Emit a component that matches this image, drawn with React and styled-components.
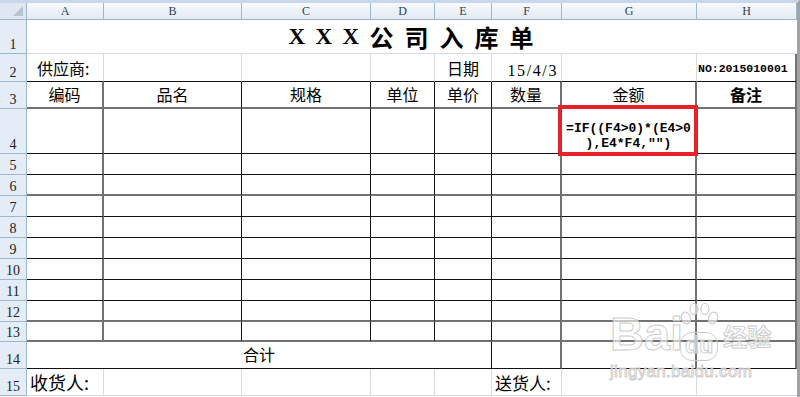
import styled, { createGlobalStyle } from "styled-components";

const GlobalStyle = createGlobalStyle`
  html, body { margin: 0; padding: 0; background: #fff; }
  body { width: 800px; height: 397px; overflow: hidden; }
`;

// border kinds used by the sheet
const LINE = {
  g: "1px solid #d4dbe6",
  k: "1px solid #111",
  d: "2px solid #727272",
  h: "1px solid #9eb6ce",
  n: "none",
};

const CJK = `"Noto Sans CJK SC", "Noto Sans", sans-serif`;
const SERIF = `"Liberation Serif", "DejaVu Serif", serif`;
const MONO = `"Liberation Mono", "DejaVu Sans Mono", monospace`;

const Frame = styled.div`
  position: relative;
  width: 800px;
  height: 397px;
  box-sizing: border-box;
  border-top: 3px solid #c8d7eb;
  border-right: 3px solid #a3a3a3;
  overflow: hidden;
  background: #fff;
`;

const Sheet = styled.div`
  display: grid;
  grid-template-columns: 27px 77px 138px 129px 64px 57px 70px 135px 100px;
  grid-template-rows: 17px 34px 28px 27px 45px repeat(8, 21px) 20px 27px 27px;
`;

const ColHead = styled.div`
  box-sizing: border-box;
  border-right: ${LINE.h};
  border-bottom: ${LINE.h};
  background: linear-gradient(#f7f9fc, #e3eaf3);
  display: flex;
  align-items: center;
  justify-content: center;
  font-family: ${SERIF};
  font-size: 12px;
  color: #2a3f5a;
  position: relative;
`;

const Corner = styled(ColHead)`
  background: #dfe7f2;
  &::after {
    content: "";
    position: absolute;
    right: 3px;
    bottom: 3px;
    width: 0;
    height: 0;
    border-left: 10px solid transparent;
    border-bottom: 10px solid #b9c4d2;
  }
`;

const RowHead = styled.div`
  box-sizing: border-box;
  border-right: ${LINE.h};
  border-bottom: ${LINE.h};
  background: #e4ecf7;
  display: flex;
  align-items: flex-end;
  justify-content: center;
  font-family: ${SERIF};
  font-size: 14px;
  line-height: 16px;
  color: #222;
`;

const Cell = styled.div`
  box-sizing: border-box;
  grid-column: span ${(p) => p.$span || 1};
  border-right: ${(p) => LINE[p.$r || "g"]};
  border-bottom: ${(p) => LINE[p.$b || "g"]};
  display: flex;
  align-items: ${(p) => p.$v || "flex-end"};
  justify-content: ${(p) => p.$h || "center"};
  padding: 0 ${(p) => p.$pr || 0}px ${(p) => p.$pb ?? 1}px ${(p) => p.$pl || 0}px;
  font-family: ${CJK};
  font-size: ${(p) => p.$size || 16}px;
  font-weight: ${(p) => (p.$bold ? 700 : 400)};
  color: #000;
  white-space: nowrap;
  position: relative;
`;

const Title = styled(Cell)`
  gap: 11px;
  font-size: 24px;
  font-weight: 700;
  padding-right: 2px;
`;

const TitleChar = styled.span`
  width: ${(p) => (p.$latin ? 16 : 24)}px;
  text-align: center;
  font-family: ${(p) => (p.$latin ? SERIF : CJK)};
  font-size: ${(p) => (p.$latin ? 23 : 24)}px;
`;

const DateText = styled.span`
  font-family: ${SERIF};
  font-size: 16px;
  letter-spacing: 1.6px;
`;

const Serial = styled.span`
  font-family: ${MONO};
  font-size: 11.5px;
  font-weight: 700;
  margin-bottom: 5px;
`;

const Formula = styled.div`
  font-family: ${MONO};
  font-size: 13px;
  font-weight: 700;
  line-height: 15px;
  text-align: center;
  margin-bottom: 1px;
`;

const Highlight = styled.div`
  position: absolute;
  left: -4px;
  top: -4px;
  right: -3px;
  bottom: -3px;
  border: 4px solid #e8202a;
  z-index: 2;
  pointer-events: none;
`;

const Watermark = styled.div`
  position: absolute;
  left: 610px;
  top: 294px;
  pointer-events: none;
  white-space: nowrap;
  font-family: "Liberation Sans", Arial, sans-serif;
  font-weight: 700;
  color: rgba(255, 255, 255, 0.6);
  -webkit-text-stroke: 1px rgba(200, 200, 200, 0.9);
  z-index: 3;
`;

const MarkTop = styled.div`
  display: flex;
  align-items: flex-end;
  height: 64px;
`;

const Bai = styled.span`
  font-size: 47px;
  line-height: 46px;
  margin-bottom: 4px;
`;

const PawBox = styled.div`
  display: flex;
  flex-direction: column;
  align-items: center;
  width: 44px;
  margin-left: -6px;
`;

const Du = styled.span`
  font-size: 23px;
  line-height: 25px;
  padding: 0 4px 2px;
  border: 1px solid rgba(200, 200, 200, 0.9);
  border-radius: 12px;
  margin-top: -4px;
`;

const Jing = styled.span`
  font-family: ${CJK};
  font-size: 24px;
  line-height: 30px;
  margin-bottom: 10px;
  margin-left: 2px;
`;

const Domain = styled.div`
  font-size: 17px;
  font-weight: 400;
  margin-top: 1px;
  letter-spacing: 0.3px;
`;

const COLS = ["A", "B", "C", "D", "E", "F", "G", "H"];
const COL_R = ["d", "k", "k", "k", "k", "d", "d", "d"];
const HEADS = ["编码", "品名", "规格", "单位", "单价", "数量", "金额", "备注"];
const ROW_B = { 4: "k", 5: "k", 6: "d", 7: "k", 8: "k", 9: "k", 10: "k", 11: "k", 12: "d", 13: "d" };
const TITLE = ["X", "X", "X", "公", "司", "入", "库", "单"];

function Paw() {
  return (
    <svg width="44" height="34" viewBox="0 0 44 34">
      <g fill="rgba(255,255,255,0.6)" stroke="rgba(200,200,200,0.9)" strokeWidth="1.2">
        <ellipse cx="9" cy="16" rx="4.5" ry="6" transform="rotate(-20 9 16)" />
        <ellipse cx="17" cy="7" rx="4" ry="5.5" />
        <ellipse cx="28" cy="7" rx="4" ry="5.5" />
        <ellipse cx="36" cy="16" rx="4.5" ry="6" transform="rotate(20 36 16)" />
      </g>
    </svg>
  );
}

export default function App() {
  const body = [];
  for (let r = 5; r <= 13; r++) {
    body.push(<RowHead key={`h${r}`}>{r}</RowHead>);
    COLS.forEach((c, i) => (
      body.push(<Cell key={`${c}${r}`} $r={COL_R[i]} $b={ROW_B[r]} />)
    ));
  }

  return (
    <>
      <GlobalStyle />
      <Frame>
        <Sheet>
          <Corner />
          {COLS.map((c) => <ColHead key={c}>{c}</ColHead>)}

          <RowHead>1</RowHead>
          <Title $span={8} $r="n" $v="center" $pb={0}>
            {TITLE.map((t, i) => (
              <TitleChar key={i} $latin={t === "X"}>{t}</TitleChar>
            ))}
          </Title>

          <RowHead>2</RowHead>
          <Cell $h="flex-start" $pl={10} $b="k">供应商:</Cell>
          <Cell $b="k" />
          <Cell $b="k" />
          <Cell $b="k" />
          <Cell $b="k">日期</Cell>
          <Cell $b="k" $h="flex-end" $pr={3}><DateText>15/4/3</DateText></Cell>
          <Cell $b="k" />
          <Cell $b="k" $r="d" $h="flex-start" $pl={1}><Serial>NO:2015010001</Serial></Cell>

          <RowHead>3</RowHead>
          {HEADS.map((t, i) => (
            <Cell key={t} $r={COL_R[i]} $b="d" $bold={t === "备注"}>{t}</Cell>
          ))}

          <RowHead>4</RowHead>
          {COLS.map((c, i) => (
            <Cell key={`${c}4`} $r={COL_R[i]} $b={ROW_B[4]}>
              {c === "G" && (
                <>
                  <Formula>=IF((F4&gt;0)*(E4&gt;0<br />),E4*F4,"")</Formula>
                  <Highlight />
                </>
              )}
            </Cell>
          ))}

          {body}

          <RowHead>14</RowHead>
          <Cell $span={5} $r="k" $b="k" $pb={2}>合计</Cell>
          <Cell $r="d" $b="k" />
          <Cell $r="d" $b="k" />
          <Cell $r="d" $b="k" />

          <RowHead>15</RowHead>
          <Cell $h="flex-start" $pl={3} $size={18} $pb={0}>收货人:</Cell>
          <Cell />
          <Cell />
          <Cell />
          <Cell />
          <Cell $h="flex-start" $pl={3} $size={17} $pb={0}>送货人:</Cell>
          <Cell />
          <Cell $r="n" />
        </Sheet>

        <Watermark>
          <MarkTop>
            <Bai>Bai</Bai>
            <PawBox>
              <Paw />
              <Du>du</Du>
            </PawBox>
            <Jing>经验</Jing>
          </MarkTop>
          <Domain>jingyan.baidu.com</Domain>
        </Watermark>
      </Frame>
    </>
  );
}
